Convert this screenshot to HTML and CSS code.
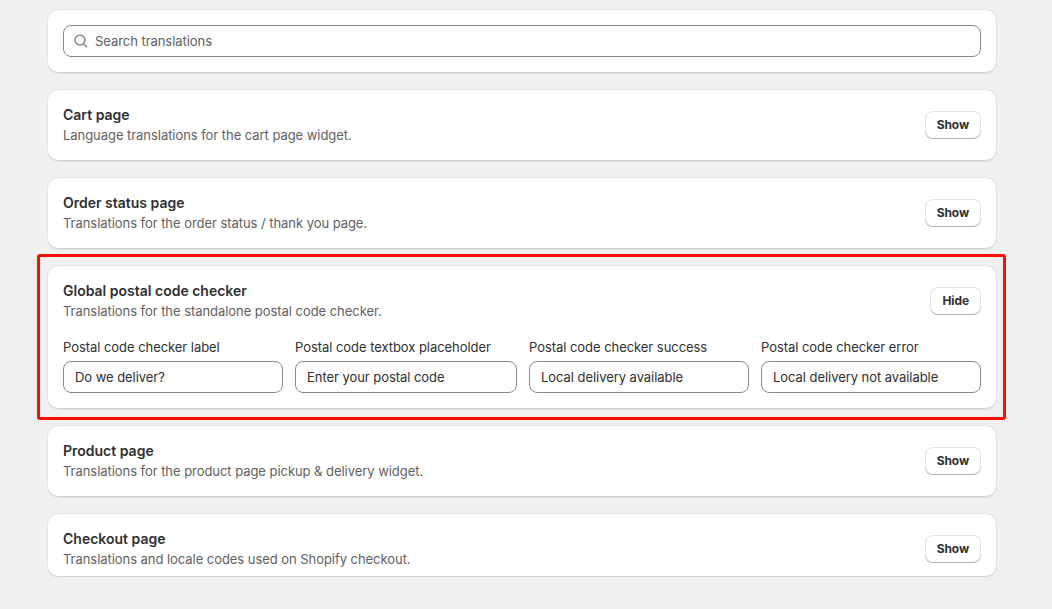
FILE: index.html
```
<!DOCTYPE html>
<html lang="en">

<head>
  <meta charset="UTF-8">
  <meta name="viewport" content="width=device-width, initial-scale=1.0">
  <title>Translations</title>
  <link rel="stylesheet" href="styles.css">
</head>

<body>

  <div class="page">
    <div class="card">
      <div class="search">
        <svg class="search-icon" viewBox="0 0 20 20" width="20" height="20">
          <circle cx="9" cy="9.1" r="4.9" />
          <path d="M12.6 12.7l3 3" />
        </svg>
        <input class="search-input" type="text" placeholder="Search translations">
      </div>
    </div>

    <div class="card">
      <div class="head">
        <div class="info">
          <h2>Cart page</h2>
          <p>Language translations for the cart page widget.</p>
        </div>
        <button class="btn">Show</button>
      </div>
    </div>

    <div class="card">
      <div class="head">
        <div class="info">
          <h2>Order status page</h2>
          <p>Translations for the order status / thank you page.</p>
        </div>
        <button class="btn">Show</button>
      </div>
    </div>

    <div class="card marked">
      <div class="head">
        <div class="info">
          <h2>Global postal code checker</h2>
          <p>Translations for the standalone postal code checker.</p>
        </div>
        <button class="btn">Hide</button>
      </div>
      <div class="fields">
        <label class="field">
          <span>Postal code checker label</span>
          <input type="text" value="Do we deliver?">
        </label>
        <label class="field">
          <span>Postal code textbox placeholder</span>
          <input type="text" value="Enter your postal code">
        </label>
        <label class="field">
          <span>Postal code checker success</span>
          <input type="text" value="Local delivery available">
        </label>
        <label class="field">
          <span>Postal code checker error</span>
          <input type="text" value="Local delivery not available">
        </label>
      </div>
    </div>

    <div class="card">
      <div class="head">
        <div class="info">
          <h2>Product page</h2>
          <p>Translations for the product page pickup &amp; delivery widget.</p>
        </div>
        <button class="btn">Show</button>
      </div>
    </div>

    <div class="card last">
      <div class="head">
        <div class="info">
          <h2>Checkout page</h2>
          <p>Translations and locale codes used on Shopify checkout.</p>
        </div>
        <button class="btn">Show</button>
      </div>
    </div>
  </div>

</body>

</html>
```
FILE: styles.css
```
* {
  margin: 0;
  padding: 0;
  box-sizing: border-box;
}

body {
  background-color: #f0f0f0;
  font-family: Inter, "Liberation Sans", sans-serif;
  font-size: 13px;
  line-height: 20px;
  letter-spacing: -.05px;
  color: #303030;
}

.page {
  width: 950px;
  margin-left: 47px;
  padding-top: 9px;
  display: flex;
  flex-direction: column;
  gap: 16px;
}

.card {
  position: relative;
  padding: 16px;
  background-color: #fff;
  border-radius: 12px;
  box-shadow: 0 1px 0 rgba(26, 26, 26, .07), inset 1px 0 0 #e2e2e2, inset -1px 0 0 #e2e2e2, inset 0 -1px 0 #cfcfcf, inset 0 1px 0 #e4e4e4;
}

.card.last {
  padding-bottom: 8px;
}

/* red frame around the open section */
.marked::after {
  content: "";
  position: absolute;
  top: -11px;
  left: -10px;
  right: -9px;
  bottom: -11px;
  border: 3px solid #ff0c00;
  border-radius: 3px;
  pointer-events: none;
}

.search {
  display: flex;
  align-items: center;
  gap: 4px;
  height: 32px;
  padding: 0 7px;
  border: 1px solid #8a8a8a;
  border-radius: 8px;
  background-color: #fdfdfd;
}

.search-icon {
  fill: none;
  stroke: #8a8a8a;
  stroke-width: 1.5;
  stroke-linecap: round;
}

input {
  font: inherit;
  letter-spacing: inherit;
  color: #303030;
  outline: none;
}

.search-input {
  flex: 1;
  border: 0;
  background: none;
}

.search-input::placeholder {
  color: #616161;
}

.head {
  display: flex;
  align-items: center;
  justify-content: space-between;
}

.info h2 {
  font-size: 14px;
  font-weight: 600;
  line-height: 20px;
  letter-spacing: 0;
}

.info p {
  color: #616161;
}

.btn {
  height: 28px;
  padding: 0 12px 2px;
  border: 0;
  border-radius: 8px;
  background-color: #fff;
  box-shadow: inset 0 -1px 0 #b5b5b5, inset 0 0 0 1px #e3e3e3;
  font-family: inherit;
  font-size: 12px;
  font-weight: 700;
  letter-spacing: -.1px;
  color: #303030;
}

.fields {
  display: grid;
  grid-template-columns: 220px 222px 220px 220px;
  gap: 12px;
  margin-top: 16px;
}

.field {
  display: flex;
  flex-direction: column;
  gap: 4px;
}

.field input {
  width: 100%;
  height: 32px;
  padding: 0 11px;
  border: 1px solid #8a8a8a;
  border-radius: 8px;
  background-color: #fdfdfd;
}
```
